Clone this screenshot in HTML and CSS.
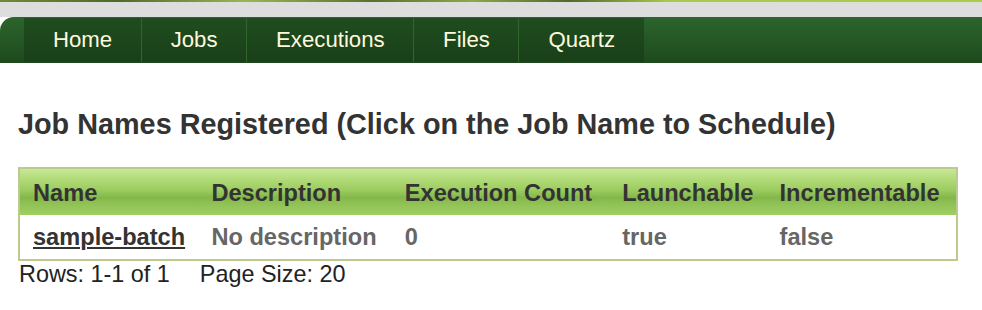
FILE: index.html
```html
<!DOCTYPE html>
<html>
<head>
<meta charset="utf-8">
<title>Jobs</title>
<link rel="stylesheet" href="styles.css">
</head>
<body>
<div class="banner"></div>
<div class="band"></div>
<nav class="nav">
  <ul class="menu">
    <li><a href="#">Home</a></li>
    <li><a href="#">Jobs</a></li>
    <li><a href="#">Executions</a></li>
    <li><a href="#">Files</a></li>
    <li><a href="#">Quartz</a></li>
  </ul>
</nav>
<main class="content">
  <h1 class="title">Job Names Registered (Click on the Job Name to Schedule)</h1>
  <table class="jobs">
    <colgroup>
      <col class="c1"><col class="c2"><col class="c3"><col class="c4"><col class="c5">
    </colgroup>
    <thead>
      <tr><th>Name</th><th>Description</th><th>Execution Count</th><th>Launchable</th><th>Incrementable</th></tr>
    </thead>
    <tbody>
      <tr><td><a href="#" class="job-link">sample-batch</a></td><td>No description</td><td>0</td><td>true</td><td>false</td></tr>
    </tbody>
  </table>
  <div class="pager"><span>Rows: 1-1 of 1</span><span class="size">Page Size: 20</span></div>
</main>
</body>
</html>
```

FILE: styles.css
```css
html, body {
  margin: 0;
  padding: 0;
  background: #fff;
  font-family: "Liberation Sans", Arial, Helvetica, sans-serif;
}
.banner {
  height: 2px;
  background: linear-gradient(90deg, #6f8a36 0%, #4e6a2b 12%, #9ab554 25%, #58712f 38%, #8ca84a 48%, #4f6a2c 58%, #a7cb48 68%, #a8cd46 100%);
}
.band {
  height: 15px;
  background: #dddddd;
}
.nav {
  background: linear-gradient(#2c642c, #1e4a1e);
  border-top-left-radius: 14px;
  padding: 1px 0 1px 24px;
  height: 44px;
}
.menu {
  list-style: none;
  margin: 0;
  padding: 0;
  display: flex;
  height: 44px;
}
.menu li {
  background: linear-gradient(#1f4d1f, #1a3f1a);
  border-left: 1px solid #2e662e;
  display: flex;
  align-items: center;
}
.menu li:first-child {
  border-left: none;
}
.menu a {
  color: #fdf9dc;
  text-decoration: none;
  font-size: 22.2px;
  padding: 0 28.5px 0 29px;
}
.content {
  padding: 0 18px;
}
.title {
  margin: 0;
  padding-top: 44px;
  font-size: 28.8px;
  line-height: 34px;
  color: #333;
  font-weight: bold;
}
.jobs {
  margin-top: 26px;
  border: 2px solid #bec98e;
  border-collapse: collapse;
  table-layout: fixed;
  width: 940px;
  font-size: 23.6px;
  font-weight: bold;
}
.c1 { width: 179px; }
.c2 { width: 193px; }
.c3 { width: 217px; }
.c4 { width: 157px; }
.c5 { width: 190px; }
.jobs th {
  height: 43px;
  padding: 3px 0 0 13px;
  text-align: left;
  color: #333;
  white-space: nowrap;
  background: linear-gradient(#c7e895 0%, #afd975 25%, #9ccd61 45%, #84b74a 62%, #8ec054 74%, #9fd064 100%);
}
.jobs td {
  height: 44px;
  padding: 0 0 0 13px;
  color: #666;
  white-space: nowrap;
  background: #fff;
}
.job-link {
  color: #333;
  text-decoration: underline;
}
.pager {
  font-size: 23.4px;
  color: #222;
  line-height: 26px;
  padding-left: 1px;
}
.pager .size {
  margin-left: 30px;
}
```
